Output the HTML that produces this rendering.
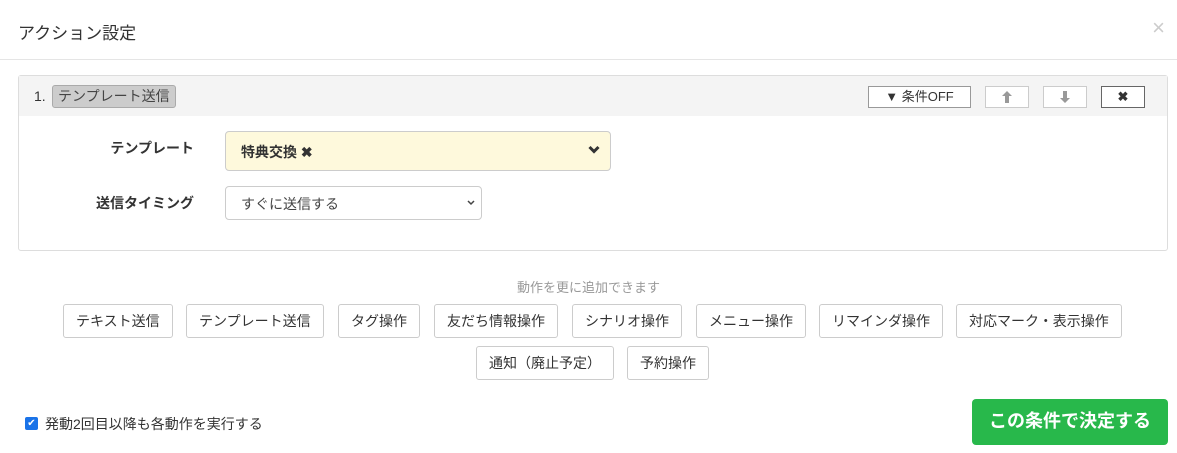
<!DOCTYPE html>
<html><head><meta charset="utf-8"><style>
*{box-sizing:border-box}
body{margin:0;width:1177px;height:453px;background:#fff;font-family:"Liberation Sans","Noto Sans CJK JP",sans-serif;color:#333;font-size:14px;position:relative;overflow:hidden}
.abs{position:absolute}
.title{left:18px;top:19px;font-size:17px;color:#333}
.close{right:12px;top:15px;font-size:22px;color:#ccc}
.hr{left:0;top:59px;width:1177px;height:1px;background:#e5e5e5}
.panel{left:18px;top:75px;width:1150px;height:176px;border:1px solid #ddd;border-radius:3px}
.phead{left:0;top:0;width:100%;height:40px;background:#f4f4f4}
.tag{left:33px;top:9px;padding:0 5px;height:23px;line-height:21px;background:#ccc;border:1px solid #aaa;border-radius:3px;font-size:14px;color:#444}
.btn{border:1px solid #999;background:#fff;height:22px;text-align:center;font-size:13px;line-height:20px}
.lbl{font-weight:bold;font-size:14px;color:#333;text-align:right}
.sel1{left:225px;top:131px;width:386px;height:40px;background:#fef9dc;border:1px solid #ccc;border-radius:4px;font-weight:bold;font-size:14px;padding:10px 15px}
.sel2{left:225px;top:186px;width:257px;height:34px;border:1px solid #ccc;border-radius:4px;font-size:14px;padding:7px 15px;color:#444}
.ab{height:34px;border:1px solid #ccc;border-radius:3px;font-size:14px;line-height:32px;padding:0 12px;color:#333;top:304px}
.go{left:972px;top:399px;width:196px;height:46px;background:#28b84b;border-radius:4px;color:#fff;font-size:18px;font-weight:bold;text-align:center;line-height:45px}
</style></head><body>
<div class="abs title">アクション設定</div>
<div class="abs close">×</div>
<div class="abs hr"></div>
<div class="abs panel">
 <div class="abs phead"></div>
 <div class="abs" style="left:15px;top:12px;font-size:14px">1.</div>
 <div class="abs tag">テンプレート送信</div>
 <div class="abs btn" style="left:849px;top:10px;width:103px">▼ 条件OFF</div>
 <div class="abs btn" style="left:966px;top:10px;width:44px;border-color:#ccc"><svg width="12" height="14" viewBox="0 0 12 14" style="margin-top:3px"><path d="M6 1L11 6H8V13H4V6H1Z" fill="#999"/></svg></div>
 <div class="abs btn" style="left:1024px;top:10px;width:44px;border-color:#ccc"><svg width="12" height="14" viewBox="0 0 12 14" style="margin-top:3px"><path d="M6 13L11 8H8V1H4V8H1Z" fill="#999"/></svg></div>
 <div class="abs btn" style="left:1082px;top:10px;width:44px;border-color:#666;font-weight:bold">✖</div>
</div>
<div class="abs lbl" style="left:60px;width:134px;top:138px">テンプレート</div>
<div class="abs lbl" style="left:60px;width:134px;top:193px">送信タイミング</div>
<div class="abs sel1">特典交換 ✖<svg style="position:absolute;right:10px;top:13px" width="12" height="10" viewBox="0 0 12 10"><path d="M1.5 2L6 6.5L10.5 2" stroke="#333" stroke-width="3" fill="none"/></svg></div>
<div class="abs sel2">すぐに送信する<svg style="position:absolute;right:6px;top:13px" width="8" height="6" viewBox="0 0 8 6"><path d="M1 1L4 4L7 1" stroke="#444" stroke-width="1.5" fill="none"/></svg></div>
<div class="abs" style="left:0;width:1177px;top:277px;text-align:center;color:#999;font-size:13px">動作を更に追加できます</div>
<div class="abs ab" style="left:63px">テキスト送信</div>
<div class="abs ab" style="left:186px">テンプレート送信</div>
<div class="abs ab" style="left:338px">タグ操作</div>
<div class="abs ab" style="left:434px">友だち情報操作</div>
<div class="abs ab" style="left:572px">シナリオ操作</div>
<div class="abs ab" style="left:696px">メニュー操作</div>
<div class="abs ab" style="left:819px">リマインダ操作</div>
<div class="abs ab" style="left:956px">対応マーク・表示操作</div>
<div class="abs ab" style="left:476px;top:346px">通知（廃止予定）</div>
<div class="abs ab" style="left:627px;top:346px">予約操作</div>
<div class="abs" style="left:25px;top:417px;width:13px;height:13px;background:#1a73e8;border-radius:2px;color:#fff;font-size:10px;text-align:center;line-height:13px">✔</div>
<div class="abs" style="left:45px;top:414px;font-size:14px">発動2回目以降も各動作を実行する</div>
<div class="abs go">この条件で決定する</div>
</body></html>
